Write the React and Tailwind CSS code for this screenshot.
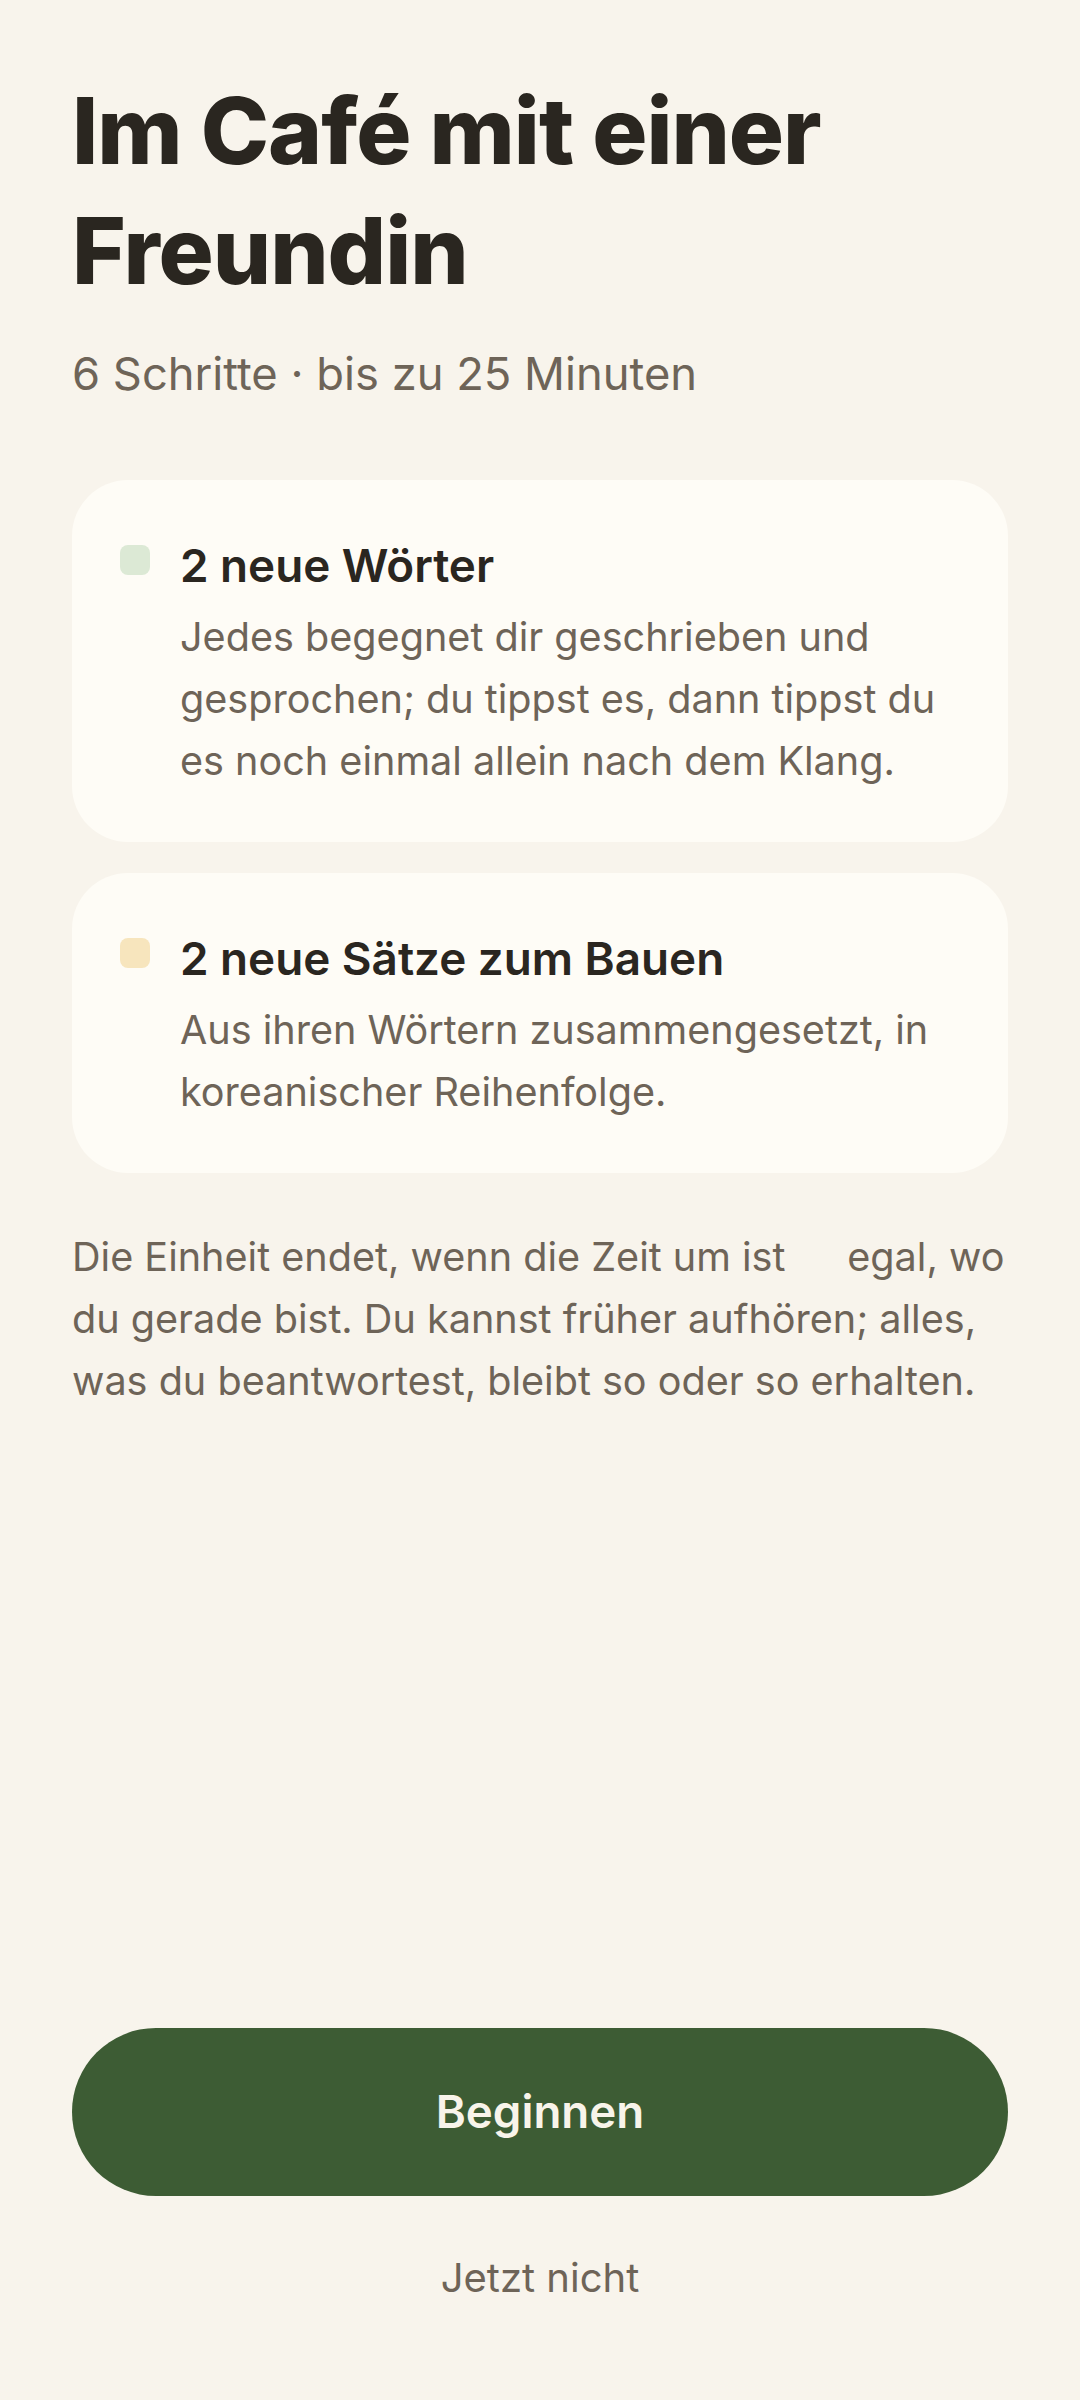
export default function App() {
  const items = [
    {
      dot: "bg-[#dce9d5]",
      title: "2 neue Wörter",
      body: "Jedes begegnet dir geschrieben und gesprochen; du tippst es, dann tippst du es noch einmal allein nach dem Klang.",
    },
    {
      dot: "bg-[#f7e5bd]",
      title: "2 neue Sätze zum Bauen",
      body: "Aus ihren Wörtern zusammengesetzt, in koreanischer Reihenfolge.",
    },
  ];

  return (
    <div className="flex min-h-screen flex-col bg-[#f8f4ec] px-[72px] pt-[71px] pb-[91px] font-['Inter',sans-serif]">
      <h1 className="text-[92px] font-extrabold leading-[120px] tracking-[-0.011em] text-[#2a2620]">
        Im Café mit einer Freundin
      </h1>
      <p className="mt-[31px] text-[45.3px] leading-[63px] text-[#6e6458]">
        6 Schritte · bis zu 25 Minuten
      </p>

      <div className="mt-[75px] flex flex-col gap-[31px]">
        {items.map((item) => (
          <div
            key={item.title}
            className="flex items-start gap-[30px] rounded-[56px] bg-[#fefcf6] pt-[57px] pr-[36px] pb-[50px] pl-[48px]"
          >
            <div className={`mt-[8px] h-[30px] w-[30px] shrink-0 rounded-[8px] ${item.dot}`} />
            <div>
              <h2 className="text-[45.8px] font-semibold leading-[58px] text-[#2a2620]">{item.title}</h2>
              <p className="mt-[11px] text-[39.6px] leading-[62px] text-[#6e6458]">{item.body}</p>
            </div>
          </div>
        ))}
      </div>

      <p className="mt-[53px] -mr-[8px] text-[39.6px] leading-[62px] text-[#6e6458]">
        Die Einheit endet, wenn die Zeit um ist <span className="text-transparent">—</span> egal, wo du gerade bist. Du kannst früher aufhören; alles, was du beantwortest, bleibt so oder so erhalten.
      </p>

      <div className="flex-1" />

      <button className="h-[168px] w-full rounded-full bg-[#3d5c34] text-[45.7px] font-semibold text-[#f8f4ea]">
        Beginnen
      </button>
      <button className="mt-[51px] text-[40px] leading-[62px] text-[#6e6458]">Jetzt nicht</button>
    </div>
  );
}
